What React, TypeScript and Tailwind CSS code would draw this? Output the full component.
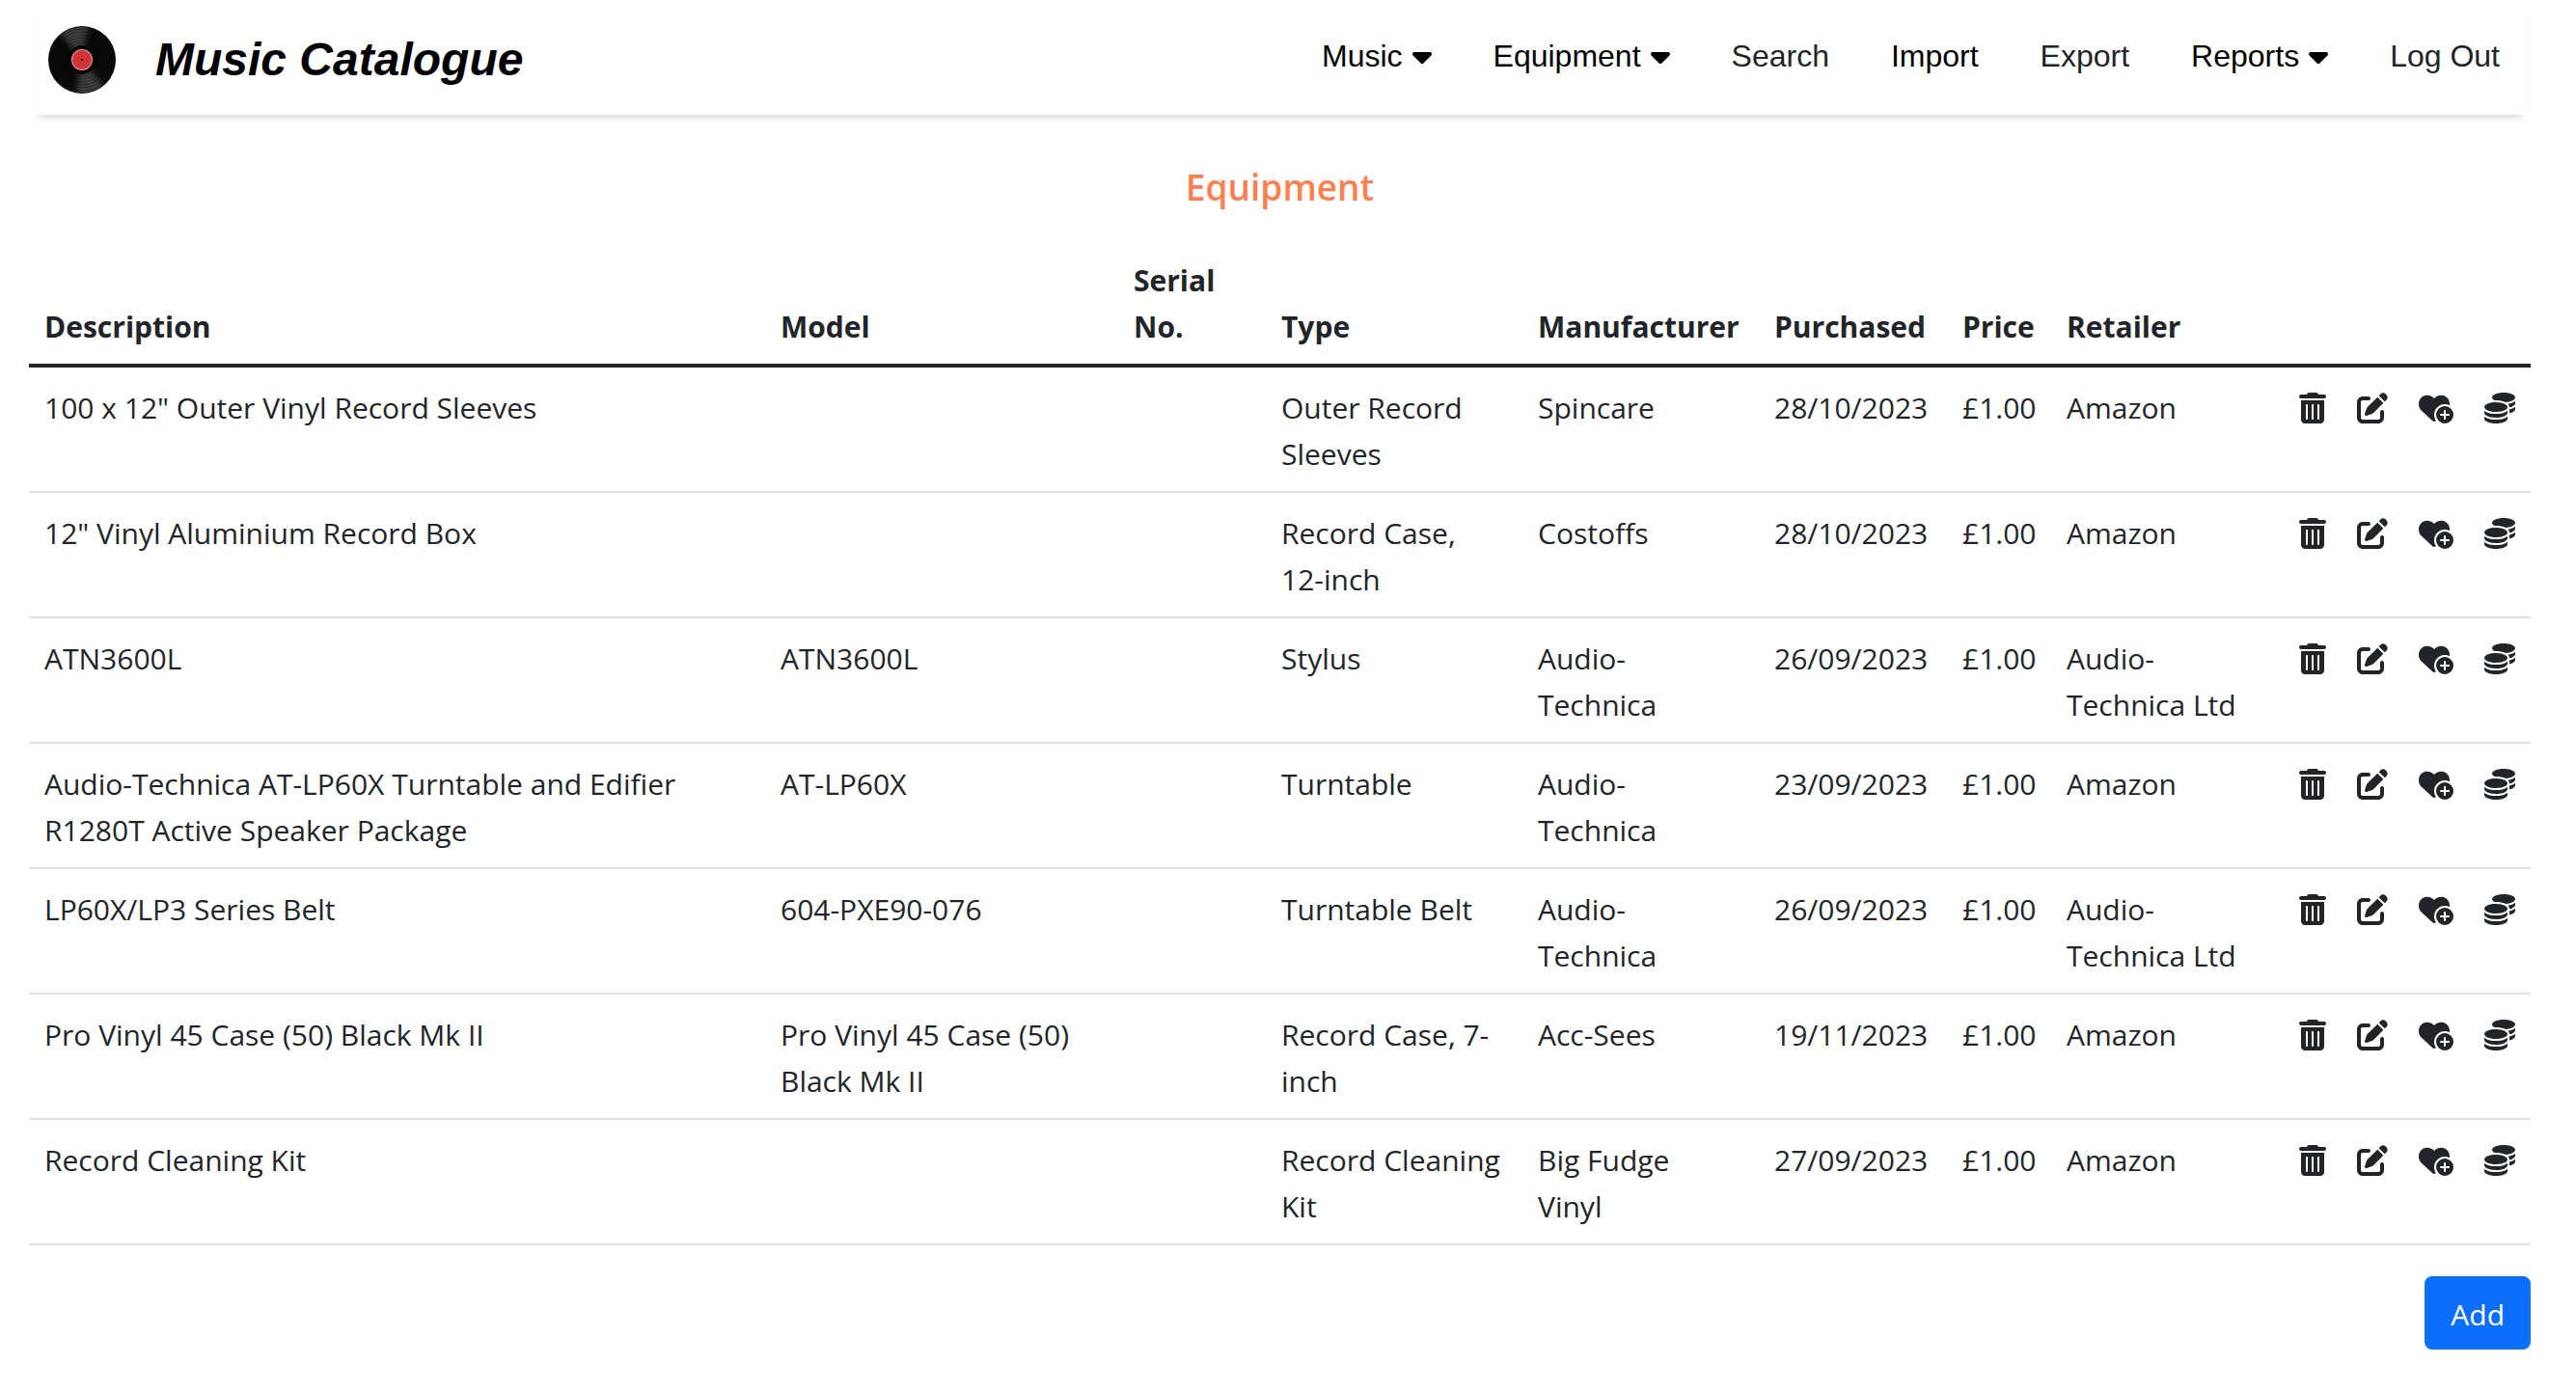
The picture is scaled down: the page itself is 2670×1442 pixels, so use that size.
import React from "react";
import { FaCaretDown, FaCoins, FaHeartCirclePlus, FaPenToSquare, FaTrashCan } from "react-icons/fa6";

type NavEntry = { label: string; menu?: boolean; dark?: boolean };

const NAV: NavEntry[] = [
  { label: "Music", menu: true },
  { label: "Equipment", menu: true },
  { label: "Search" },
  { label: "Import", dark: true },
  { label: "Export" },
  { label: "Reports", menu: true },
  { label: "Log Out" },
];

type Item = {
  description: string;
  model?: string;
  serial?: string;
  type: string;
  manufacturer: string;
  purchased: string;
  price: string;
  retailer: string;
};

const ITEMS: Item[] = [
  { description: '100 x 12" Outer Vinyl Record Sleeves', type: "Outer Record Sleeves", manufacturer: "Spincare", purchased: "28/10/2023", price: "£1.00", retailer: "Amazon" },
  { description: '12" Vinyl Aluminium Record Box', type: "Record Case, 12-inch", manufacturer: "Costoffs", purchased: "28/10/2023", price: "£1.00", retailer: "Amazon" },
  { description: "ATN3600L", model: "ATN3600L", type: "Stylus", manufacturer: "Audio-Technica", purchased: "26/09/2023", price: "£1.00", retailer: "Audio-Technica Ltd" },
  { description: "Audio-Technica AT-LP60X Turntable and Edifier R1280T Active Speaker Package", model: "AT-LP60X", type: "Turntable", manufacturer: "Audio-Technica", purchased: "23/09/2023", price: "£1.00", retailer: "Amazon" },
  { description: "LP60X/LP3 Series Belt", model: "604-PXE90-076", type: "Turntable Belt", manufacturer: "Audio-Technica", purchased: "26/09/2023", price: "£1.00", retailer: "Audio-Technica Ltd" },
  { description: "Pro Vinyl 45 Case (50) Black Mk II", model: "Pro Vinyl 45 Case (50) Black Mk II", type: "Record Case, 7-inch", manufacturer: "Acc-Sees", purchased: "19/11/2023", price: "£1.00", retailer: "Amazon" },
  { description: "Record Cleaning Kit", type: "Record Cleaning Kit", manufacturer: "Big Fudge Vinyl", purchased: "27/09/2023", price: "£1.00", retailer: "Amazon" },
];

const ACTIONS = [
  { name: "Delete", Icon: FaTrashCan, size: "h-8 w-7 shrink-0" },
  { name: "Edit", Icon: FaPenToSquare, size: "h-8 w-8 shrink-0" },
  { name: "Add to wish list", Icon: FaHeartCirclePlus, size: "h-8 w-9 shrink-0" },
  { name: "Edit purchase details", Icon: FaCoins, size: "h-8 w-8 shrink-0" },
];

function RecordLogo() {
  return (
    <svg viewBox="0 0 70 70" className="size-[70px]" aria-hidden="true">
      <defs>
        <filter id="soft" x="-20%" y="-20%" width="140%" height="140%">
          <feGaussianBlur stdDeviation="3" />
        </filter>
        <clipPath id="disc">
          <circle cx="35" cy="35" r="34" />
        </clipPath>
      </defs>
      <circle cx="35" cy="35" r="35" fill="#0a0a0a" />
      <g clipPath="url(#disc)">
        <g filter="url(#soft)">
          <path d="M35 35L8 2L42 -6Z" fill="#404040" />
          <path d="M35 35L62 68L28 76Z" fill="#404040" />
        </g>
        <g fill="none" stroke="#000" strokeOpacity="0.35">
          <circle cx="35" cy="35" r="32" />
          <circle cx="35" cy="35" r="29" />
          <circle cx="35" cy="35" r="26" />
          <circle cx="35" cy="35" r="23" />
          <circle cx="35" cy="35" r="20" />
          <circle cx="35" cy="35" r="17" />
        </g>
      </g>
      <circle cx="35" cy="35" r="15" fill="#050505" />
      <circle cx="35" cy="35" r="11" fill="#e59a9a" />
      <circle cx="35" cy="35" r="10" fill="#d13438" />
      <circle cx="35" cy="35" r="1" fill="#2a0808" />
    </svg>
  );
}

export default function App() {
  return (
    <div className="bg-white pr-[47px] pl-[30px] font-['Open_Sans','Noto_Sans',sans-serif] text-[30px] leading-12 text-[#212529]">
      <header className="mx-1 flex h-[119px] items-center justify-between pl-4 font-['Liberation_Sans',Arial,sans-serif] text-[32px] shadow-[0_8px_8px_-6px_rgba(0,0,0,0.18)]">
        <a href="#home" className="flex items-center gap-[41px] pt-1">
          <RecordLogo />
          <span className="text-5xl font-bold text-black italic">Music Catalogue</span>
        </a>
        <nav className="-mr-1 flex pb-1">
          {NAV.map(({ label, menu, dark }) =>
            menu ? (
              <button key={label} type="button" className="flex items-center gap-2.5 px-8 text-black">
                {label}
                <FaCaretDown className="h-8 w-5" />
              </button>
            ) : (
              <a key={label} href="#page" className={dark ? "px-8 text-black" : "px-8"}>
                {label}
              </a>
            ),
          )}
        </nav>
      </header>

      <main>
        <h1 className="pt-[51px] pb-[31px] text-center text-[37px] font-semibold text-[#ff7f50]">Equipment</h1>
        <table className="w-full table-fixed border-collapse text-left">
          <colgroup>
            <col />
            <col className="w-[366px]" />
            <col className="w-[153px]" />
            <col className="w-[266px]" />
            <col className="w-[245px]" />
            <col className="w-[195px]" />
            <col className="w-[108px]" />
            <col className="w-[241px]" />
            <col className="w-[60px]" />
            <col className="w-16" />
            <col className="w-[68px]" />
            <col className="w-16" />
          </colgroup>
          <thead>
            <tr className="border-b-4 border-[#212529] align-bottom">
              {["Description", "Model", "Serial No.", "Type", "Manufacturer", "Purchased", "Price", "Retailer"].map((heading) => (
                <th key={heading} scope="col" className="pt-[18px] pb-[14px] pl-4 font-bold">
                  {heading}
                </th>
              ))}
              <td colSpan={4} />
            </tr>
          </thead>
          <tbody>
            {ITEMS.map((item) => (
              <tr key={item.description} className="border-b-2 border-[#dee2e6] align-top">
                <td className="pt-[18px] pr-4 pb-[14px] pl-4">{item.description}</td>
                <td className="pt-[18px] pr-4 pb-[14px] pl-4">{item.model}</td>
                <td className="pt-[18px] pr-4 pb-[14px] pl-4">{item.serial}</td>
                <td className="pt-[18px] pr-5 pb-[14px] pl-4">{item.type}</td>
                <td className="pt-[18px] pr-5 pb-[14px] pl-4">{item.manufacturer}</td>
                <td className="pt-[18px] pb-[14px] pl-4">{item.purchased}</td>
                <td className="pt-[18px] pb-[14px] pl-4">{item.price}</td>
                <td className="pt-[18px] pr-4 pb-[14px] pl-4">{item.retailer}</td>
                {ACTIONS.map(({ name, Icon, size }) => (
                  <td key={name} className="px-4 pt-[18px] pb-[14px]">
                    <button type="button" aria-label={`${name}: ${item.description}`} className="flex h-12 items-center">
                      <Icon className={size} />
                    </button>
                  </td>
                ))}
              </tr>
            ))}
          </tbody>
        </table>
        <div className="flex justify-end pt-8">
          <button type="button" className="rounded-lg bg-[#0d6efd] px-[27px] pt-4 pb-3 text-white">
            Add
          </button>
        </div>
      </main>
    </div>
  );
}
